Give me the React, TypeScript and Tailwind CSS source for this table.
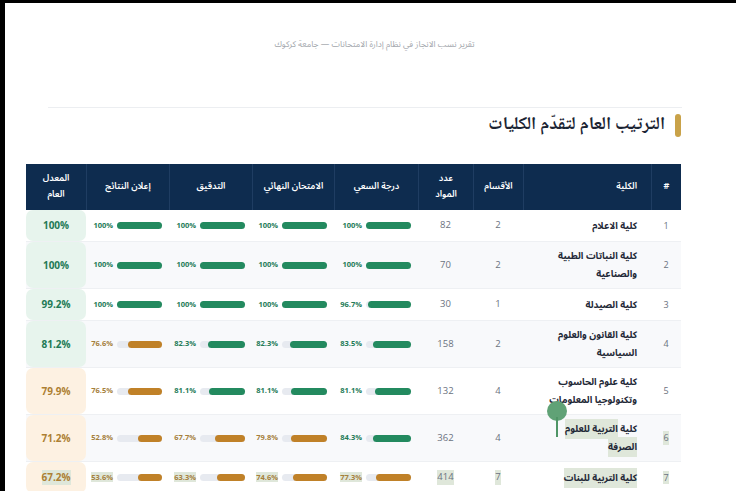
import React from "react";

type Row = {
  n: number;
  name: string[];
  depts: number;
  subjects: number;
  vals: number[]; // السعي، النهائي، التدقيق، إعلان النتائج
  avg: string;
  good: boolean;
};

const ROWS: Row[] = [
  { n: 1, name: ["كلية الاعلام"], depts: 2, subjects: 82, vals: [100, 100, 100, 100], avg: "100%", good: true },
  { n: 2, name: ["كلية النباتات الطبية", "والصناعية"], depts: 2, subjects: 70, vals: [100, 100, 100, 100], avg: "100%", good: true },
  { n: 3, name: ["كلية الصيدلة"], depts: 1, subjects: 30, vals: [96.7, 100, 100, 100], avg: "99.2%", good: true },
  { n: 4, name: ["كلية القانون والعلوم", "السياسية"], depts: 2, subjects: 158, vals: [83.5, 82.3, 82.3, 76.6], avg: "81.2%", good: true },
  { n: 5, name: ["كلية علوم الحاسوب", "وتكنولوجيا المعلومات"], depts: 4, subjects: 132, vals: [81.1, 81.1, 81.1, 76.5], avg: "79.9%", good: false },
  { n: 6, name: ["كلية التربية للعلوم", "الصرفة"], depts: 4, subjects: 362, vals: [84.3, 79.8, 67.7, 52.8], avg: "71.2%", good: false },
  { n: 7, name: ["كلية التربية للبنات"], depts: 7, subjects: 414, vals: [77.3, 74.6, 63.3, 53.6], avg: "67.2%", good: false },
];

const GRID = "grid grid-cols-[30px_128px_50px_55px_84px_82px_83px_83px_60px]";
const AR = "font-['Noto_Sans_Arabic','DejaVu_Sans',sans-serif]";
const NASKH = "font-['Noto_Naskh_Arabic','Noto_Sans_Arabic','DejaVu_Sans',serif]";
const NUM = "font-['Open_Sans','DejaVu_Sans',sans-serif]";

function fmt(v: number) {
  return v === 100 ? "100%" : `${v}%`;
}

function Sel({ on, children }: { on: boolean; children: React.ReactNode }) {
  return on ? <span className="bg-[#dfe7da]">{children}</span> : <>{children}</>;
}

function Bar({ v, sel }: { v: number; sel: boolean }) {
  const ok = v >= 80;
  return (
    <div className="flex items-center gap-[4px] pr-[7px]">
      <div className="flex h-[7px] w-[45px] justify-start rounded-full bg-[#e7eaf0]">
        <div className={ok ? "h-full rounded-full bg-[#238a5f]" : "h-full rounded-full bg-[#c08128]"} style={{ width: `${v}%` }} />
      </div>
      <span dir="ltr" className={`${NUM} text-[7.5px] font-bold ${ok ? "text-[#247b58]" : "text-[#a5803c]"}`}>
        <Sel on={sel}>{fmt(v)}</Sel>
      </span>
    </div>
  );
}

export default function App() {
  return (
    <div className="relative h-[491px] w-[736px] overflow-hidden border-l-[5px] border-t-[3px] border-black bg-white">
      <div dir="rtl" className={`${AR} pl-[8px] pt-[35px] text-center text-[8.5px] leading-[13px] text-[#a3a7ad]`}>
        تقرير نسب الانجاز في نظام إدارة الامتحانات — جامعة كركوك
      </div>

      <div className="ml-[43px] mt-[56px] h-px w-[634px] bg-[#eceef1]" />

      <div dir="rtl" className="ml-[21px] mr-[55px] mt-[6px] flex h-[23px] items-center gap-[10px]">
        <div className="h-[23px] w-[6px] rounded-full bg-[#c9a249]" />
        <div className={`${NASKH} text-[18px] font-bold leading-[23px] text-[#1b2433]`}>الترتيب العام لتقدّم الكليات</div>
      </div>

      <div dir="rtl" className="ml-[21px] mt-[27px] w-[655px]">
        <div className={`${GRID} h-[46px] bg-[#0e2c4f] text-white ${AR} text-[9px] font-semibold leading-[16px]`}>
          {["#", "الكلية", "الأقسام", "عدد\nالمواد", "درجة السعي", "الامتحان النهائي", "التدقيق", "إعلان النتائج", "المعدل\nالعام"].map((h, i) => (
            <div
              key={h}
              className={`flex items-center whitespace-pre-line border-l border-[#1f3d62] ${i === 1 ? "justify-start pr-[14px]" : "justify-center text-center"} ${i === 8 ? "border-l-0" : ""}`}
            >
              {h}
            </div>
          ))}
        </div>

        {ROWS.map((r, idx) => {
          const last = r.n === 7;
          return (
            <div key={r.n} className={`${GRID} min-h-[32px] border-b border-[#eef0f3] ${idx % 2 === 1 ? "bg-[#f8f9fb]" : "bg-white"}`}>
              <div className={`${NUM} flex items-center justify-center text-[9px] text-[#6b7280]`}>
                <Sel on={r.n >= 6}>{r.n}</Sel>
              </div>
              <div className={`${AR} flex flex-col justify-center whitespace-nowrap py-[5px] pr-[14px] text-[9.5px] font-bold leading-[18px] text-[#1f2937]`}>
                {r.name.map((l, i) => (
                  <div key={i}>
                    {r.n === 6 && i === 0 ? (
                      <>كلية <span className="bg-[#dfe7da]">التربية للعلوم</span></>
                    ) : (
                      <Sel on={r.n >= 6}>{l}</Sel>
                    )}
                  </div>
                ))}
              </div>
              <div className={`${NUM} flex items-center justify-center text-[9.5px] text-[#6b7280]`}>
                <Sel on={last}>{r.depts}</Sel>
              </div>
              <div className={`${NUM} flex items-center justify-center text-[9.5px] text-[#6b7280]`}>
                <Sel on={last}>{r.subjects}</Sel>
              </div>
              {r.vals.map((v, i) => (
                <div key={i} className="flex items-center">
                  <Bar v={v} sel={last} />
                </div>
              ))}
              <div
                className={`${NUM} flex items-center justify-center rounded-[7px] text-[10px] font-bold ${r.good ? "bg-[#e7f4ed] text-[#237a56]" : "bg-[#fdf1e2] text-[#ad7f33]"}`}
              >
                <Sel on={last}>{r.avg}</Sel>
              </div>
            </div>
          );
        })}
      </div>

      {/* text selection handle */}
      <div className="absolute left-[542px] top-[398px] h-[20px] w-[20px] rounded-full bg-[#60a276]" />
      <div className="absolute left-[551px] top-[414px] h-[20px] w-[2px] bg-[#4f9566]" />
    </div>
  );
}
